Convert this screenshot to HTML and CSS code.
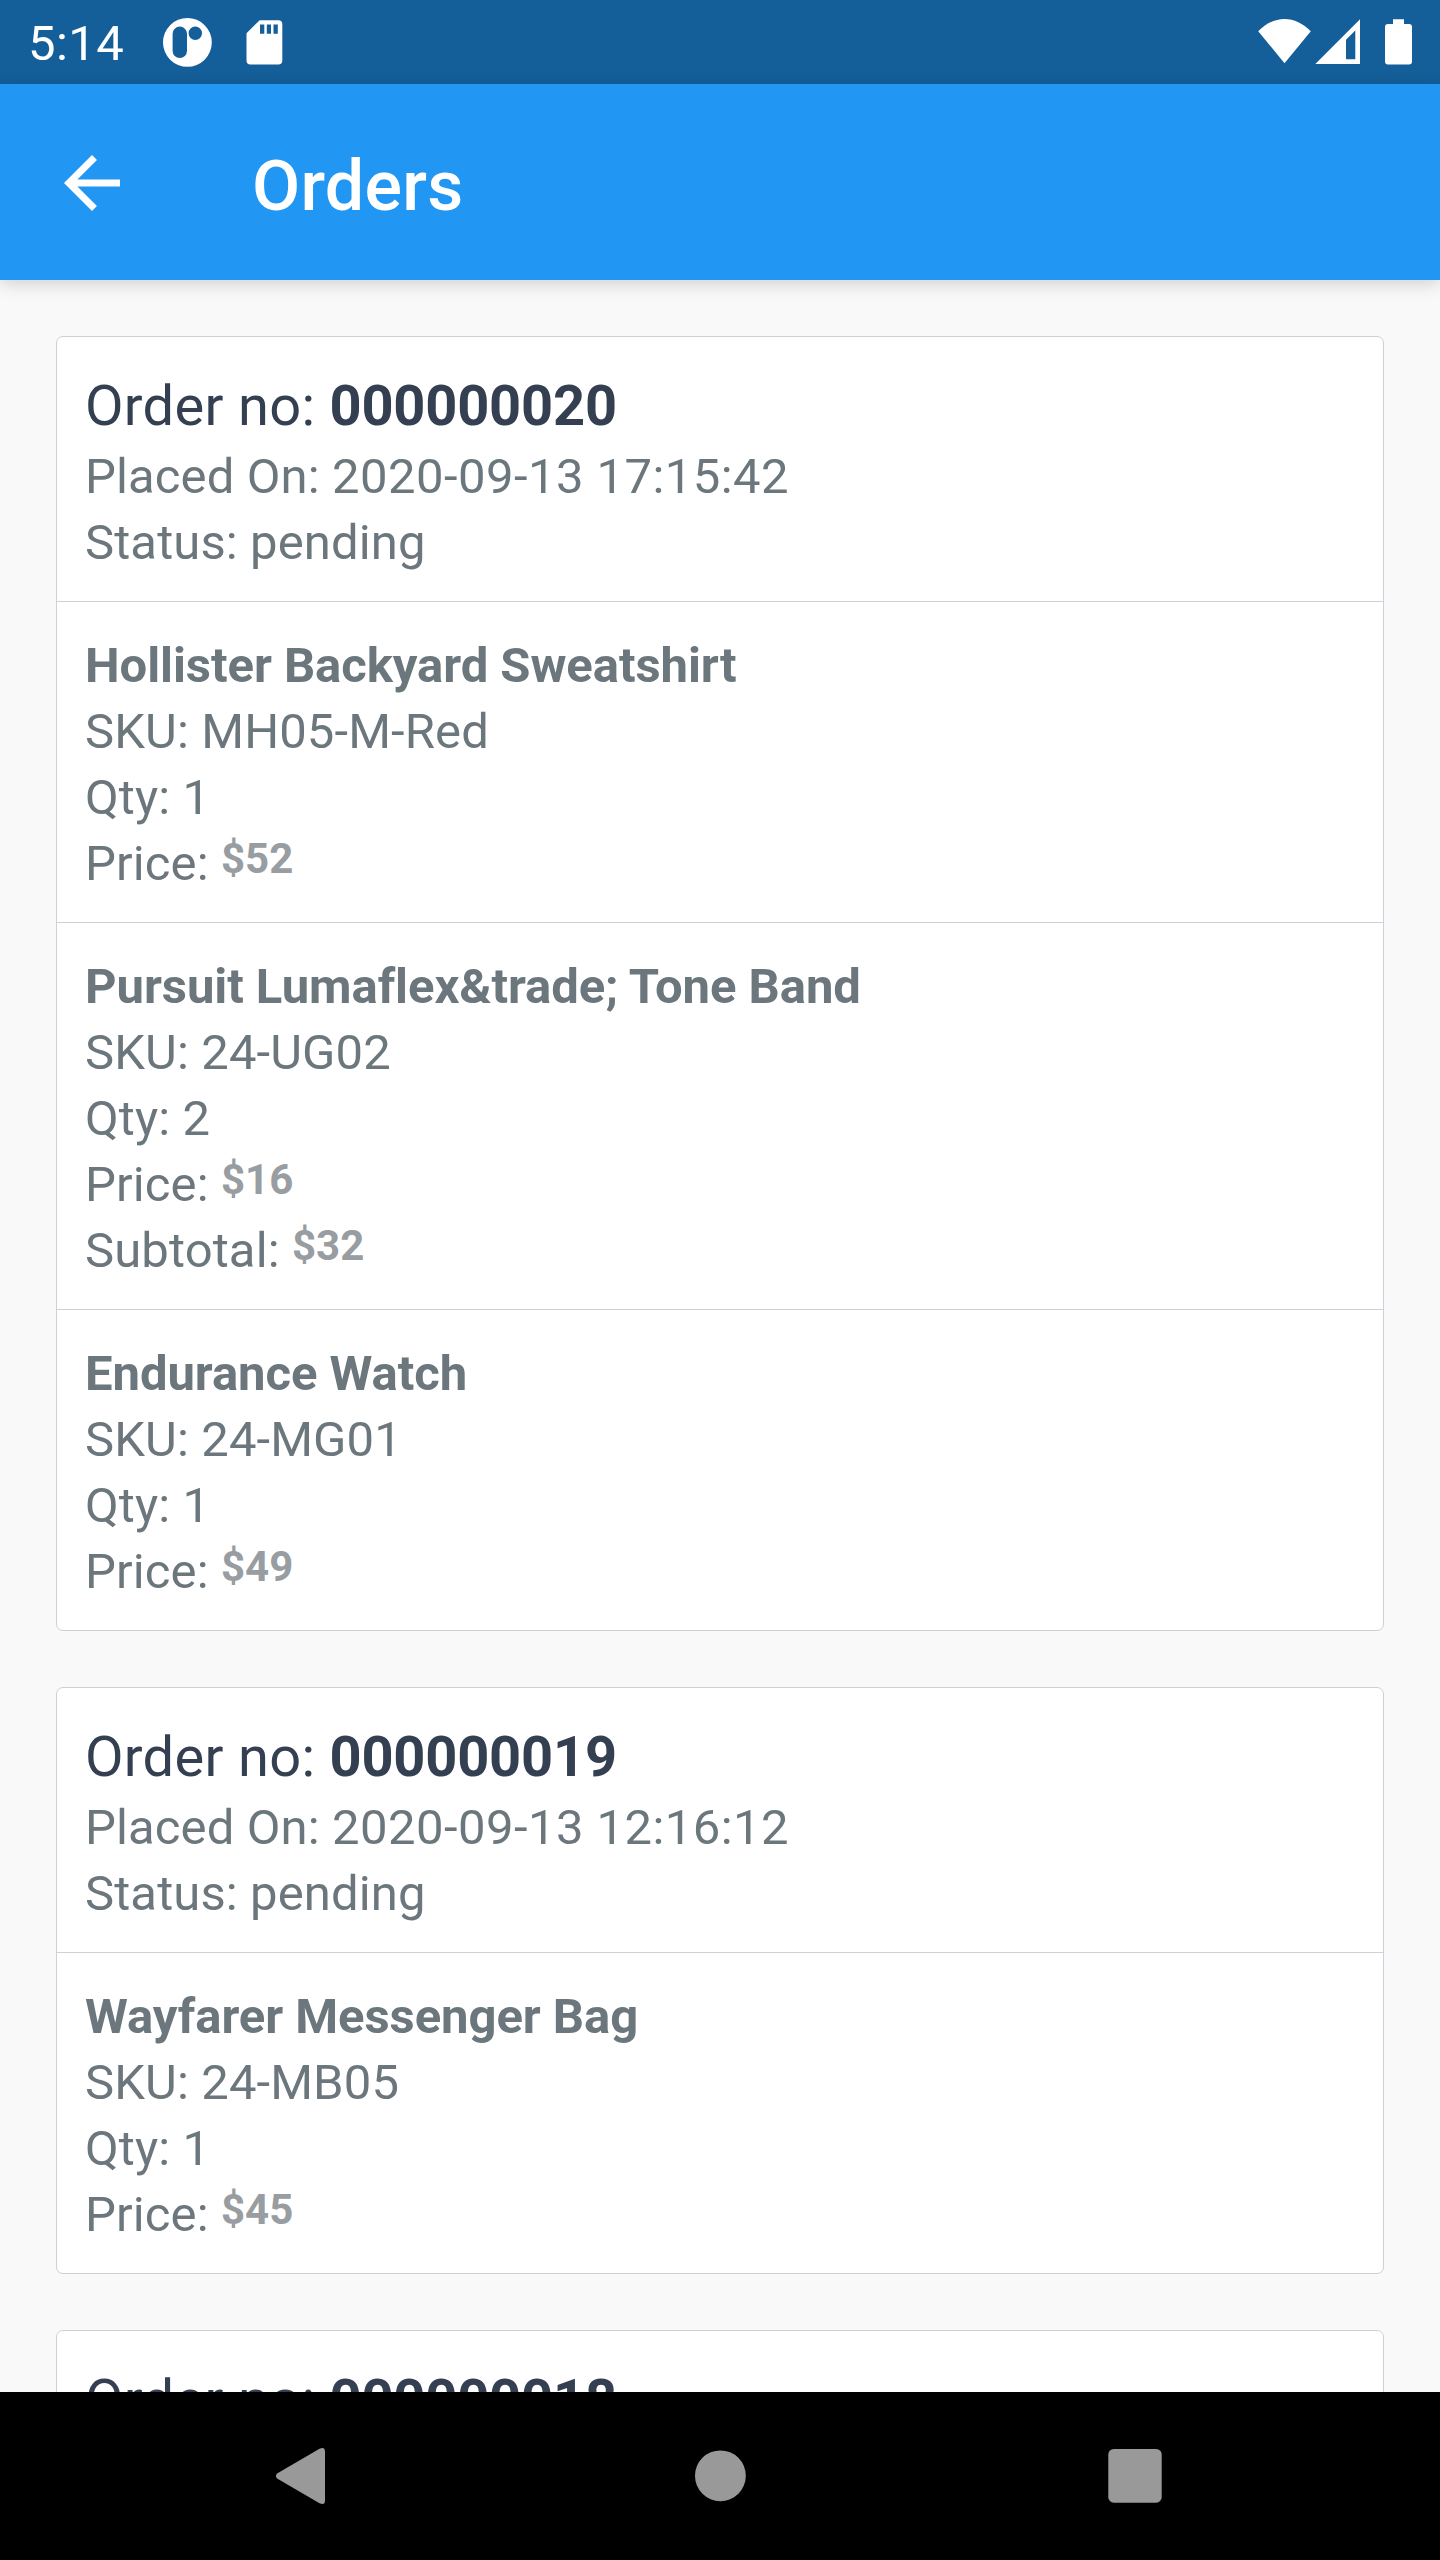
FILE: index.html
```
<!DOCTYPE html>
<html lang="en">
<head>
<meta charset="utf-8">
<title>Orders</title>
<link rel="stylesheet" href="styles.css">
</head>
<body>
<div class="screen">
  <div class="status-bar">
    <span class="clock">5:14</span>
    <svg class="app-icon" width="54" height="84" viewBox="160 0 54 84" aria-hidden="true">
      <path fill="#fff" fill-rule="evenodd" d="M187.4 18a24.4 24.4 0 1 1 0 48.8a24.4 24.4 0 1 1 0-48.8zM179.8 26.6a7.2 7.2 0 0 0-7.2 7.2v17a7.2 7.2 0 0 0 14.4 0v-17a7.2 7.2 0 0 0-7.2-7.2zM195.3 26.6a6.7 6.7 0 1 0 0 13.4a6.7 6.7 0 1 0 0-13.4z"/>
    </svg>
    <svg class="sd-icon" width="36" height="84" viewBox="246 0 36 84" aria-hidden="true">
      <path fill="#fff" fill-rule="evenodd" d="M259.7 20.2H278.300a4 4 0 0 1 4 4V60.500a4 4 0 0 1-4 4H250.500a4 4 0 0 1-4-4V33.300zM260 24.500V33.700H264.300V24.500zM266.800 24.500V33.700H271V24.500zM273.500 24.500V33.700H277.800V24.500z"/>
    </svg>
    <div class="system-icons">
      <svg width="56" height="84" viewBox="1256 0 56 84" aria-hidden="true">
        <path fill="#fff" d="M1258.200 31.300C1266 23.300 1275 19 1284.500 19S1303 23.300 1310.800 31.300L1284.500 63.200z"/>
      </svg>
      <svg width="46" height="84" viewBox="1315 0 46 84" aria-hidden="true">
        <path fill="#fff" fill-rule="evenodd" d="M1315.300 64L1360 19.300V64zM1346 39.800V59.200H1355.300V30.600z"/>
      </svg>
      <svg class="battery-icon" width="28" height="84" viewBox="1385 0 28 84" aria-hidden="true">
        <path fill="#fff" d="M1393 19.300H1404V24H1409a3 3 0 0 1 3 3V61.500a3 3 0 0 1-3 3H1388a3 3 0 0 1-3-3V27a3 3 0 0 1 3-3H1393z"/>
      </svg>
    </div>
  </div>

  <header class="app-bar">
    <svg class="back-arrow" width="84" height="84" viewBox="0 0 24 24" aria-hidden="true">
      <path fill="#fff" d="M20 11H7.830l5.590-5.590L12 4l-8 8 8 8 1.410-1.410L7.830 13H20z"/>
    </svg>
    <h1 class="app-title">Orders</h1>
  </header>

  <main class="orders">
    <section class="card">
      <div class="card-section">
        <div class="order-no">Order no: <b>000000020</b></div>
        <div class="line">Placed On: <span class="date">2020-09-13 17:15:42</span></div>
        <div class="line">Status: pending</div>
      </div>
      <div class="card-section">
        <div class="line product">Hollister Backyard Sweatshirt</div>
        <div class="line">SKU: MH05-M-Red</div>
        <div class="line">Qty: 1</div>
        <div class="line priced">Price:&nbsp;<span class="price">$52</span></div>
      </div>
      <div class="card-section">
        <div class="line product">Pursuit Lumaflex&amp;trade; Tone Band</div>
        <div class="line">SKU: 24-UG02</div>
        <div class="line">Qty: 2</div>
        <div class="line priced">Price:&nbsp;<span class="price">$16</span></div>
        <div class="line priced">Subtotal:&nbsp;<span class="price">$32</span></div>
      </div>
      <div class="card-section">
        <div class="line product">Endurance Watch</div>
        <div class="line">SKU: 24-MG01</div>
        <div class="line">Qty: 1</div>
        <div class="line priced">Price:&nbsp;<span class="price">$49</span></div>
      </div>
    </section>

    <section class="card">
      <div class="card-section">
        <div class="order-no">Order no: <b>000000019</b></div>
        <div class="line">Placed On: <span class="date">2020-09-13 12:16:12</span></div>
        <div class="line">Status: pending</div>
      </div>
      <div class="card-section">
        <div class="line product">Wayfarer Messenger Bag</div>
        <div class="line">SKU: 24-MB05</div>
        <div class="line">Qty: 1</div>
        <div class="line priced">Price:&nbsp;<span class="price">$45</span></div>
      </div>
    </section>

    <section class="card">
      <div class="card-section">
        <div class="order-no">Order no: <b>000000018</b></div>
      </div>
    </section>
  </main>

  <nav class="nav-bar">
    <svg width="60" height="60" viewBox="270 2446 60 60" aria-hidden="true">
      <path fill="#999" d="M277.500 2473.200L319.500 2448.700Q325 2446.200 325 2451.500V2500.500Q325 2505.800 319.500 2503.300L277.500 2478.800Q274.200 2476 277.500 2473.200z"/>
    </svg>
    <svg width="60" height="60" viewBox="687.5 2446 60 60" aria-hidden="true">
      <circle cx="719.900" cy="2475.800" r="25.400" fill="#999"/>
    </svg>
    <svg width="60" height="60" viewBox="1105 2446 60 60" aria-hidden="true">
      <rect x="1108.300" y="2449" width="53.400" height="53.700" rx="5.500" fill="#999"/>
    </svg>
  </nav>
</div>
</body>
</html>
```
FILE: styles.css
```
* {
  box-sizing: border-box;
}

body {
  margin: 0;
  background: #000;
  font-family: Roboto, "Liberation Sans", sans-serif;
}

.screen {
  display: flex;
  flex-direction: column;
  width: 1440px;
  height: 2560px;
  overflow: hidden;
}

svg {
  display: block;
  flex: none;
}

.status-bar {
  flex: none;
  display: flex;
  align-items: center;
  height: 84px;
  padding: 0 28px;
  background: #145e99;
  color: #fff;
}

.clock {
  width: 132px;
  padding-top: 4px;
  font-size: 49px;
  line-height: 58px;
  letter-spacing: 0.4px;
}

.sd-icon {
  margin-left: 32px;
  overflow: visible;
}

.system-icons {
  display: flex;
  margin-left: auto;
  gap: 3px;
}

.battery-icon {
  margin-left: 21px;
  margin-right: -1px;
}

.app-bar {
  flex: none;
  position: relative;
  z-index: 1;
  display: flex;
  align-items: center;
  gap: 118px;
  height: 196px;
  padding: 2px 0 0 50px;
  background: #2196f3;
  color: #fff;
  box-shadow: 0 4px 16px rgba(0, 0, 0, 0.16);
}

.app-title {
  margin: 0;
  padding-top: 5px;
  font-size: 70px;
  font-weight: 500;
  line-height: 82px;
  letter-spacing: 0.25px;
}

.orders {
  flex: 1;
  min-height: 0;
  overflow: hidden;
  display: flex;
  flex-direction: column;
  gap: 56px;
  padding: 56px 56px 0;
  background: #f9f9f9;
}

.card {
  flex: none;
  border: 1px solid #cbd0d9;
  border-radius: 7px;
  background: #fff;
}

.card-section {
  padding: 31px 28px 25px;
}

.card-section + .card-section {
  border-top: 1px solid #cbd0d9;
}

.order-no {
  font-size: 56px;
  line-height: 76px;
  letter-spacing: 0.3px;
  color: #343f52;
}

.order-no b {
  letter-spacing: -0.2px;
}

.line {
  height: 66px;
  font-size: 49px;
  line-height: 66px;
  letter-spacing: 0.12px;
  color: #6c777d;
  white-space: nowrap;
}

.date {
  letter-spacing: 0.45px;
}

.product {
  font-weight: 700;
  letter-spacing: -0.06px;
}

.priced {
  display: flex;
}

.price {
  font-size: 42px;
  font-weight: 700;
  line-height: 55px;
  letter-spacing: 0;
  color: #989da1;
}

.nav-bar {
  flex: none;
  display: flex;
  align-items: center;
  justify-content: space-between;
  height: 168px;
  padding: 0 275px 0 270px;
  background: #000;
}
```
